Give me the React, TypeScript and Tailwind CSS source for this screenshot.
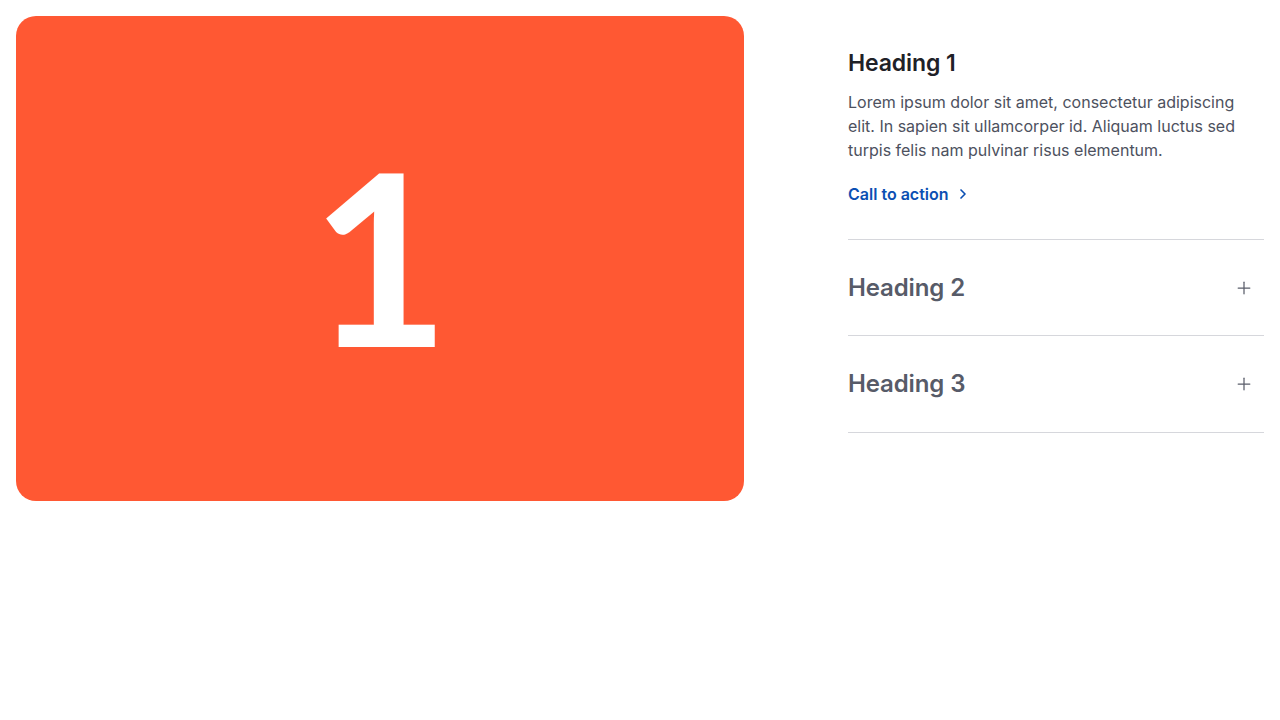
import { Plus, ChevronRight } from "lucide-react";

const font = { fontFamily: "Inter, 'Noto Sans', sans-serif" };

function Row({ title, last }: { title: string; last?: boolean }) {
  return (
    <div
      className={`flex items-center justify-between border-b border-[#d6d7dc] pr-[10px] ${last ? "h-[97px]" : "h-[96px]"}`}
    >
      <h3 className="text-[24px] font-semibold tracking-[-0.005em] text-[#575b68]">{title}</h3>
      <Plus className="h-[20px] w-[20px] text-[#5a5e6b]" strokeWidth={1.5} />
    </div>
  );
}

export default function App() {
  return (
    <div className="flex min-h-[720px] bg-white p-4" style={font}>
      {/* Image panel */}
      <div className="flex h-[485px] w-[728px] shrink-0 items-center justify-center rounded-[20px] bg-[#ff5833] pb-[10px]">
        <span
          className="text-[240px] font-bold leading-none text-white"
          style={{ fontFamily: "Lato, sans-serif" }}
        >
          1
        </span>
      </div>

      {/* Accordion */}
      <div className="ml-[104px] w-[416px] pt-8">
        <div className="border-b border-[#d6d7dc] pb-[33px]">
          <h2 className="text-[23px] font-semibold leading-[31px] tracking-[-0.005em] text-[#1f2127]">Heading 1</h2>
          <p className="mt-[11px] text-[16px] leading-[24px] text-[#4d515e]">
            Lorem ipsum dolor sit amet, consectetur adipiscing elit. In sapien sit ullamcorper id. Aliquam luctus sed turpis felis nam pulvinar risus elementum.
          </p>
          <a className="mt-5 flex items-center gap-1.5 text-[16px] font-semibold leading-[24px] text-[#0b4fb3]">
            Call to action
            <ChevronRight className="h-4 w-4" strokeWidth={2.5} />
          </a>
        </div>
        <Row title="Heading 2" />
        <Row title="Heading 3" last />
      </div>
    </div>
  );
}
